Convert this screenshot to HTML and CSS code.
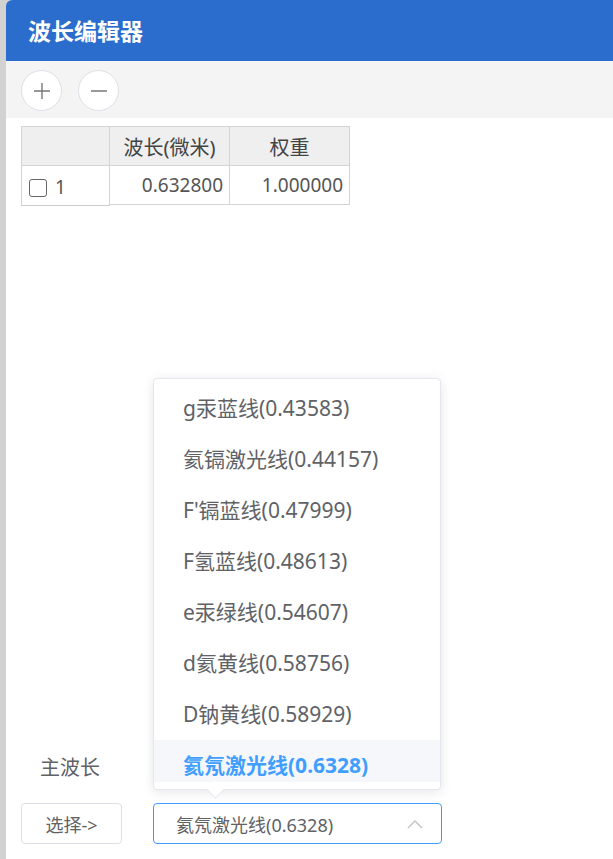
FILE: index.html
```html
<!DOCTYPE html>
<html lang="zh">
<head>
    <meta charset="UTF-8">
    <title>波长编辑器</title>
    <link rel="stylesheet" href="styles.css">
</head>
<body>
    <div class="window">
        <!-- title bar -->
        <div class="titlebar">波长编辑器</div>

        <!-- toolbar -->
        <div class="toolbar">
            <button class="round-btn">
                <svg width="18" height="18" viewBox="0 0 18 18"><path d="M9 1v16M1 9h16" stroke="#777" stroke-width="1.4" fill="none"/></svg>
            </button>
            <button class="round-btn">
                <svg width="18" height="18" viewBox="0 0 18 18"><path d="M1 9h16" stroke="#777" stroke-width="1.4" fill="none"/></svg>
            </button>
        </div>

        <!-- wavelength table -->
        <div class="table">
            <div class="cell head corner"></div>
            <div class="cell head">波长(微米)</div>
            <div class="cell head">权重</div>
            <div class="cell rowhead"><span class="check"></span>1</div>
            <div class="cell num">0.632800</div>
            <div class="cell num">1.000000</div>
        </div>

        <div class="form">
            <div class="label">主波长</div>
            <div class="form-row">
                <button class="pick-btn">选择-&gt;</button>
                <div class="select">
                    <span>氦氖激光线(0.6328)</span>
                    <svg width="16" height="10" viewBox="0 0 16 10"><path d="M1 9l7-7 7 7" stroke="#c0c4cc" stroke-width="1.5" fill="none"/></svg>
                </div>
            </div>
        </div>

        <!-- open dropdown of the select -->
        <div class="dropdown">
            <ul class="options">
                <li>g汞蓝线(0.43583)</li>
                <li>氦镉激光线(0.44157)</li>
                <li>F'镉蓝线(0.47999)</li>
                <li>F氢蓝线(0.48613)</li>
                <li>e汞绿线(0.54607)</li>
                <li>d氦黄线(0.58756)</li>
                <li>D钠黄线(0.58929)</li>
                <li class="selected">氦氖激光线(0.6328)</li>
            </ul>
            <div class="arrow"></div>
        </div>
    </div>
</body>
</html>
```

FILE: styles.css
```css
body {
    margin: 0;
    background: #d2d2d2;
    font-family: "Noto Sans", "Noto Sans CJK SC", sans-serif;
    color: #606266;
}
.window {
    margin-left: 6px;
    height: 859px;
    background: white;
    border-top-left-radius: 6px;
    overflow: hidden;
    position: relative;
    display: flex;
    flex-direction: column;
}
.titlebar {
    height: 61px;
    background: #2a6dcc;
    color: white;
    font-size: 23px;
    font-weight: bold;
    padding-left: 22px;
    line-height: 62px;
    box-sizing: border-box;
}
.toolbar {
    height: 57px;
    background: #f4f4f4;
    display: flex;
    gap: 16px;
    padding: 9px 0 0 15px;
    box-sizing: border-box;
}
.round-btn {
    width: 41px;
    height: 41px;
    border-radius: 50%;
    border: 1px solid #dcdfe6;
    background: white;
    padding: 0;
    display: flex;
    align-items: center;
    justify-content: center;
}
.table {
    margin: 8px 0 0 15px;
    display: grid;
    grid-template-columns: 89px 120px 120px;
    width: 330px;
}
.cell {
    height: 38px;
    border-right: 1px solid #d4d4d4;
    border-bottom: 1px solid #d4d4d4;
    font-size: 19px;
    color: #555;
    display: flex;
    align-items: center;
    padding: 0 6px;
}
.head {
    background: #efefef;
    border-top: 1px solid #d4d4d4;
    justify-content: center;
    color: #444;
    font-size: 20px;
}
.corner {
    border-left: 1px solid #d4d4d4;
}
.rowhead {
    border-left: 1px solid #d4d4d4;
    border-bottom-color: #ccc;
    height: 37px;
    padding-left: 7px;
    padding-top: 2px;
}
.num {
    justify-content: flex-end;
}
.check {
    width: 16px;
    height: 16px;
    border: 1.5px solid #666;
    border-radius: 3px;
    margin-right: 8px;
    margin-top: 3px;
}
.form {
    margin-top: auto;
    padding: 0 0 15px 15px;
}
.label {
    font-size: 20px;
    padding-left: 19px;
    height: 50px;
    line-height: 30px;
}
.form-row {
    display: flex;
    gap: 31px;
}
.pick-btn {
    width: 101px;
    height: 41px;
    border: 1px solid #dcdfe6;
    border-radius: 4px;
    background: white;
    color: #606266;
    font-size: 18px;
    font-family: "Noto Sans", "Noto Sans CJK SC", sans-serif;
}
.select {
    width: 289px;
    height: 41px;
    box-sizing: border-box;
    border: 1px solid #409eff;
    border-radius: 4px;
    display: flex;
    align-items: center;
    justify-content: space-between;
    padding: 0 18px 0 22px;
    font-size: 18px;
    color: #606266;
}
.dropdown {
    position: absolute;
    left: 147px;
    top: 378px;
    width: 288px;
    box-sizing: border-box;
    background: white;
    border: 1px solid #e4e7ed;
    border-radius: 4px;
    box-shadow: 0 2px 12px rgba(0, 0, 0, 0.1);
    padding: 4px 0 7px;
}
.options {
    list-style: none;
    margin: 0;
    padding: 0;
    height: 399px;
    overflow: hidden;
}
.options li {
    height: 51px;
    line-height: 51px;
    padding-left: 29px;
    font-size: 21px;
    color: #606266;
}
.options li.selected {
    background: #f5f7fa;
    color: #409eff;
    font-weight: bold;
    line-height: 50px;
}
.arrow {
    position: absolute;
    left: 55px;
    bottom: -7px;
    width: 12px;
    height: 12px;
    background: white;
    border-right: 1px solid #e4e7ed;
    border-bottom: 1px solid #e4e7ed;
    transform: rotate(45deg);
}
```
